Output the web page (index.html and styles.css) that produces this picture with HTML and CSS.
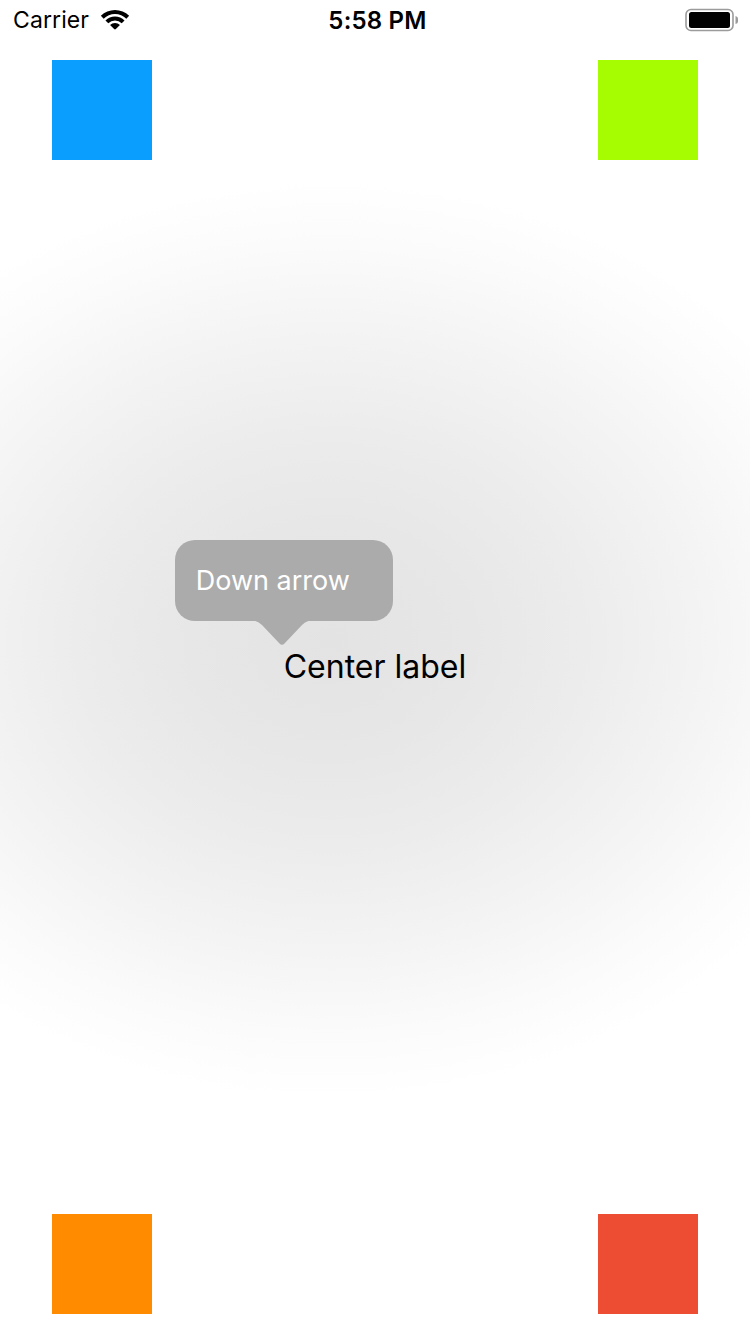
FILE: index.html
```html
<!DOCTYPE html>
<html>
<head>
<meta charset="utf-8">
<link rel="stylesheet" href="styles.css">
</head>
<body>
<div class="screen">
  <div class="status-bar">
    <div class="sb-left">
      <span class="carrier">Carrier</span>
      <svg class="wifi" width="30" height="20" viewBox="0 0 30 20">
        <path d="M0.858 5.858 A20 20 0 0 1 29.142 5.858 L26.314 8.686 A16 16 0 0 0 3.686 8.686 Z" fill="#000"/>
        <path d="M5.454 10.454 A13.5 13.5 0 0 1 24.546 10.454 L21.718 13.282 A9.5 9.5 0 0 0 8.282 13.282 Z" fill="#000"/>
        <path d="M10.05 15.05 A7 7 0 0 1 19.95 15.05 L15.9 19.1 Q15 20 14.1 19.1 Z" fill="#000"/>
      </svg>
    </div>
    <div class="sb-time">5:58 PM</div>
    <div class="sb-right">
      <svg class="battery" width="56" height="24" viewBox="0 0 56 24">
        <rect x="2" y="1.5" width="47" height="21" rx="5" ry="5" fill="none" stroke="#9b9b9b" stroke-width="1.6"/>
        <rect x="5" y="4" width="41" height="16" rx="2.5" ry="2.5" fill="#000"/>
        <path d="M51.5 8 Q54 8.5 54 10.5 L54 13.5 Q54 15.5 51.5 16 Z" fill="#9b9b9b"/>
      </svg>
    </div>
  </div>

  <div class="square-row top-row">
    <div class="square blue"></div>
    <div class="square green"></div>
  </div>

  <div class="middle">
    <div class="label-anchor">
      <span class="center-label">Center label</span>
      <div class="tooltip">
        <div class="tooltip-box">Down arrow</div>
        <svg class="tooltip-arrow" width="66" height="27" viewBox="0 0 66 27">
          <path d="M0 0 Q8 0 13 5 L30.5 23.5 Q33 26 35.5 23.5 L53 5 Q58 0 66 0 Z" fill="#ababab"/>
        </svg>
      </div>
    </div>
  </div>

  <div class="square-row bottom-row">
    <div class="square orange"></div>
    <div class="square red"></div>
  </div>
</div>
</body>
</html>
```

FILE: styles.css
```css
html, body {
  margin: 0;
  padding: 0;
}

body {
  width: 750px;
  height: 1334px;
  overflow: hidden;
  font-family: "Inter", "Roboto", "Liberation Sans", sans-serif;
  color: #000;
}

.screen {
  width: 750px;
  height: 1334px;
  display: flex;
  flex-direction: column;
  background:
    radial-gradient(ellipse 560px 460px at 330px 640px,
      #e3e3e3 0%, #e7e7e7 25%, #ececec 45%, #f4f4f4 68%, #fbfbfb 86%, #ffffff 100%);
}

.status-bar {
  height: 40px;
  display: grid;
  grid-template-columns: 1fr auto 1fr;
  align-items: center;
  padding: 0 12px 0 13px;
  flex: none;
}

.sb-left {
  display: flex;
  align-items: center;
  gap: 11px;
}

.carrier {
  font-size: 23px;
  letter-spacing: 0.1px;
}

.wifi {
  display: block;
  margin-top: -1px;
}

.sb-time {
  font-size: 24px;
  font-weight: 600;
  padding-left: 4px;
  letter-spacing: 0.2px;
}

.sb-right {
  display: flex;
  justify-content: flex-end;
}

.battery {
  display: block;
  margin-right: -2px;
}

.square-row {
  display: flex;
  justify-content: space-between;
  padding: 0 52px;
  flex: none;
}

.top-row {
  margin-top: 20px;
}

.bottom-row {
  margin-bottom: 20px;
}

.square {
  width: 100px;
  height: 100px;
}

.blue { background: #0a9ffe; }
.green { background: #a6fc00; }
.orange { background: #fe8b00; }
.red { background: #ec4d33; }

.middle {
  flex: 1;
  display: flex;
  align-items: center;
  justify-content: center;
  padding-bottom: 40px;
}

.label-anchor {
  position: relative;
}

.center-label {
  display: block;
  font-size: 32px;
  line-height: 40px;
  white-space: nowrap;
}

.tooltip {
  position: absolute;
  left: -109px;
  bottom: 100%;
  width: 218px;
  display: flex;
  flex-direction: column;
}

.tooltip-box {
  height: 81px;
  box-sizing: border-box;
  padding: 0 21px;
  display: flex;
  align-items: center;
  background: #ababab;
  border-radius: 20px;
  color: #fff;
  font-size: 27px;
  white-space: nowrap;
}

.tooltip-arrow {
  display: block;
  margin-left: 74px;
  margin-top: -1px;
}
```
